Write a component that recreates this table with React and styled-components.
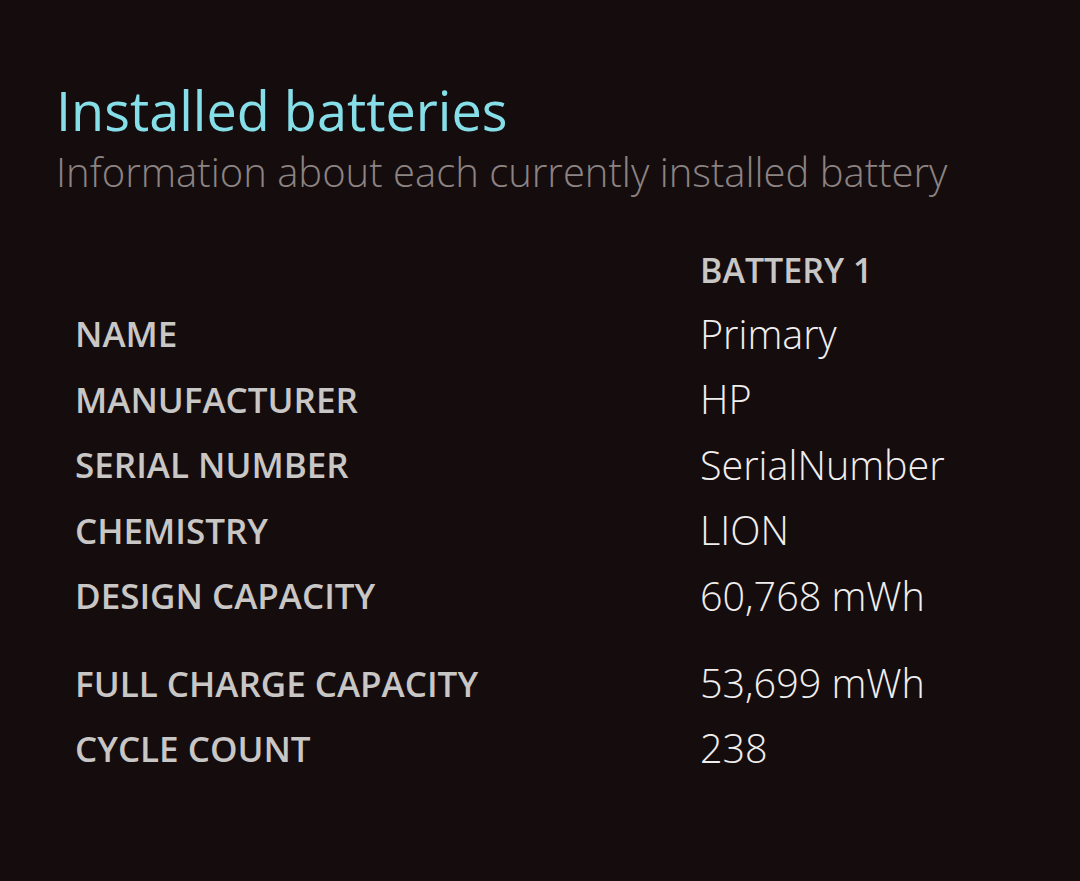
import React from "react";
import styled, { createGlobalStyle } from "styled-components";

const Global = createGlobalStyle`
  html, body { margin: 0; padding: 0; background: #150d0d; }
  body { font-family: "Open Sans", "Noto Sans", sans-serif; }
`;

const Page = styled.div`
  width: 1080px;
  height: 881px;
  box-sizing: border-box;
  background: #150d0d;
  padding: 80px 0 0 56px;
  overflow: hidden;
`;

const Title = styled.h1`
  margin: 0;
  font-family: "Open Sans", sans-serif;
  font-weight: 400;
  font-size: 54px;
  line-height: 60px;
  color: #86dfe8;
  white-space: nowrap;
`;

const Subtitle = styled.p`
  margin: 0;
  font-family: "Open Sans", sans-serif;
  font-weight: 300;
  font-size: 40px;
  line-height: 64px;
  color: #8c8383;
  white-space: nowrap;
`;

const Table = styled.div`
  display: grid;
  grid-template-columns: 625px 1fr;
  margin: 35px 0 0 19px;
`;

const Cell = styled.div`
  height: ${(p) => (p.$head ? 62 : p.$tall ? 87 : 65.5)}px;
  display: flex;
  align-items: center;
  padding-top: ${(p) => (p.$tall ? "22px" : "0")};
  box-sizing: border-box;
  white-space: nowrap;
`;

const Label = styled(Cell)`
  font-family: "Open Sans", sans-serif;
  font-weight: 600;
  font-size: 35px;
  color: #c9c6c6;
`;

const Head = styled(Cell)`
  font-family: "Open Sans", sans-serif;
  font-weight: 600;
  font-size: 34px;
  color: #c9c6c6;
`;

const Value = styled(Cell)`
  font-family: "Open Sans", sans-serif;
  font-weight: 300;
  font-size: 39.5px;
  color: #f0eeee;
`;

const rows = [
  ["NAME", "Primary"],
  ["MANUFACTURER", "HP"],
  ["SERIAL NUMBER", "SerialNumber"],
  ["CHEMISTRY", "LION"],
  ["DESIGN CAPACITY", "60,768 mWh"],
  ["FULL CHARGE CAPACITY", "53,699 mWh", true],
  ["CYCLE COUNT", "238"],
];

export default function App() {
  return (
    <Page>
      <Global />
      <Title>Installed batteries</Title>
      <Subtitle>Information about each currently installed battery</Subtitle>
      <Table>
        <Cell $head />
        <Head $head>BATTERY 1</Head>
        {rows.map(([l, v, tall]) => (
          <React.Fragment key={l}>
            <Label $tall={tall}>{l}</Label>
            <Value $tall={tall}>{v}</Value>
          </React.Fragment>
        ))}
      </Table>
    </Page>
  );
}
